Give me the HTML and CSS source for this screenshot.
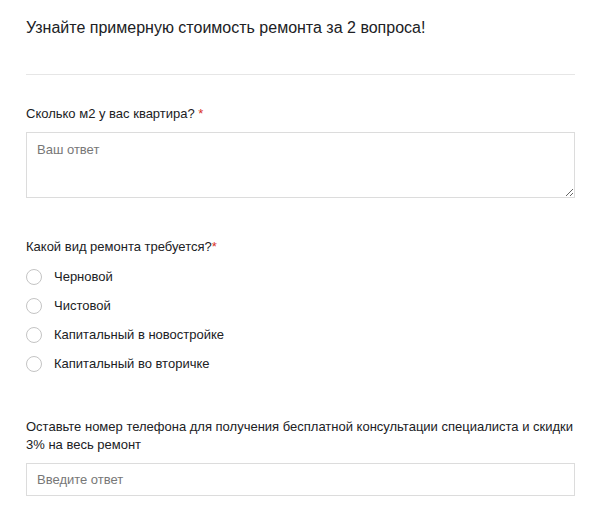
FILE: index.html
```html
<!DOCTYPE html>
<html lang="ru">

<head>
    <meta charset="UTF-8">
    <meta name="viewport" content="width=device-width, initial-scale=1.0">
    <title>Стоимость ремонта</title>
    <link rel="stylesheet" href="styles.css">
</head>

<body>
    <div class="form">
        <h1 class="title">Узнайте примерную стоимость ремонта за 2 вопроса!</h1>

        <div class="question">
            <div class="label">Сколько м2 у вас квартира? <span class="req">*</span></div>
            <textarea class="area" placeholder="Ваш ответ"></textarea>
        </div>

        <div class="question q-choice">
            <div class="label">Какой вид ремонта требуется?<span class="req">*</span></div>
            <div class="options">
                <label class="option"><span class="radio"></span>Черновой</label>
                <label class="option"><span class="radio"></span>Чистовой</label>
                <label class="option"><span class="radio"></span>Капитальный в новостройке</label>
                <label class="option"><span class="radio"></span>Капитальный во вторичке</label>
            </div>
        </div>

        <div class="question q-phone">
            <div class="label">Оставьте номер телефона для получения бесплатной консультации специалиста и скидки 3% на весь ремонт</div>
            <input class="field" type="text" placeholder="Введите ответ">
        </div>
    </div>
</body>

</html>
```

FILE: styles.css
```css
body {
    margin: 0;
    background: #fff;
    font-family: "Liberation Sans", Arial, sans-serif;
    color: #202124;
}

.form {
    padding: 18px 30px 0 26px;
}

.title {
    font-size: 16px;
    font-weight: normal;
    margin: 0;
    padding-bottom: 36px;
    border-bottom: 1px solid #e6e6e6;
    line-height: 20px;
}

.question {
    margin-top: 30px;
}

.q-choice {
    margin-top: 40px;
}

.q-phone {
    margin-top: 45px;
}

.label {
    font-size: 13px;
    line-height: 18px;
    margin-bottom: 9px;
}

.req {
    color: #d93025;
}

.area {
    display: block;
    box-sizing: border-box;
    width: 100%;
    height: 66px;
    border: 1px solid #dcdcdc;
    padding: 9px 10px;
    font-family: inherit;
    font-size: 13px;
    color: #202124;
    resize: vertical;
}

.area::placeholder,
.field::placeholder {
    color: #777;
}

.options {
    display: flex;
    flex-direction: column;
    gap: 11px;
    margin-top: 12px;
}

.option {
    display: flex;
    align-items: center;
    gap: 12px;
    font-size: 13px;
    line-height: 18px;
}

.radio {
    width: 14px;
    height: 14px;
    border: 1px solid #c4c4c4;
    border-radius: 50%;
}

.field {
    display: block;
    box-sizing: border-box;
    width: 100%;
    height: 33px;
    border: 1px solid #dcdcdc;
    padding: 0 10px;
    font-family: inherit;
    font-size: 13px;
}
```
